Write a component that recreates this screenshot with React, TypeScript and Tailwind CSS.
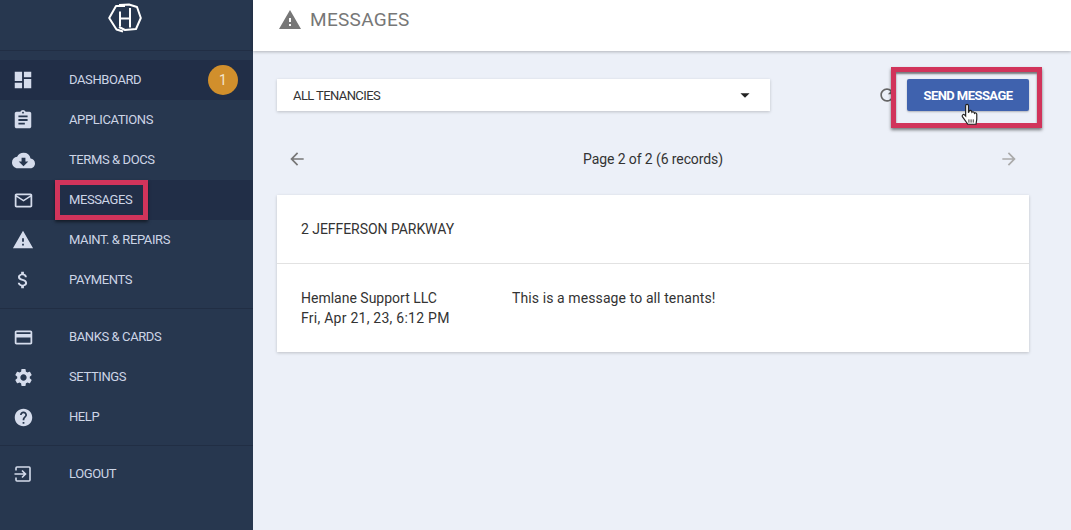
import React from 'react';
import {
  MdDashboard,
  MdAssignment,
  MdCloudDownload,
  MdMailOutline,
  MdWarning,
  MdAttachMoney,
  MdCreditCard,
  MdSettings,
  MdHelp,
  MdArrowBack,
  MdArrowForward,
  MdArrowDropDown,
  MdRefresh,
} from 'react-icons/md';

const LogoutIcon = () => (
  <svg width="18" height="18" viewBox="0 0 18 18" fill="none" stroke="currentColor" strokeWidth="1.6">
    <path d="M2 5.500V3a1 1 0 0 1 1-1h12a1 1 0 0 1 1 1v12a1 1 0 0 1-1 1H3a1 1 0 0 1-1-1v-2.500" />
    <path d="M0.500 9H11M8 5.500 11.500 9 8 12.500" />
  </svg>
);

const Logo = () => (
  <svg width="34" height="30" viewBox="0 0 34 30" fill="none" stroke="white" strokeWidth="2" strokeLinejoin="round">
    <path d="M17 3 8 3 1.200 15 8.500 26.500 15 28.500" />
    <path d="M11 2 21 1.500 29 4 32.800 15 28 26 17 27 11 24" />
    <path d="M12 8.500V23.500M22 5V24.500M12 15.500H22" />
  </svg>
);

const HandCursor = () => (
  <svg width="20" height="24" viewBox="0 0 18 22">
    <path
      d="M5 2.500a1.300 1.300 0 0 1 2.600 0V9l.6-1.500a1.200 1.200 0 0 1 2.200 0l.3 1a1.200 1.200 0 0 1 2.100.300l.3.700a1.200 1.200 0 0 1 2.100.800v4.500L14.500 19.500H7L2 12.500a1.300 1.300 0 0 1 2-1.600l1 1z"
      fill="white"
      stroke="#222"
      strokeWidth="1.100"
    />
    <path d="M8 15v3M10 15v3M12 15v3" stroke="#333" strokeWidth="0.900" />
  </svg>
);

type Item = { label: string; icon: React.ReactNode; active?: boolean; badge?: string };

const topItems: Item[] = [
  { label: 'DASHBOARD', icon: <MdDashboard size={22} />, active: true, badge: '1' },
  { label: 'APPLICATIONS', icon: <MdAssignment size={22} /> },
  { label: 'TERMS & DOCS', icon: <MdCloudDownload size={23} /> },
  { label: 'MESSAGES', icon: <MdMailOutline size={21} />, active: true },
  { label: 'MAINT. & REPAIRS', icon: <MdWarning size={22} /> },
  { label: 'PAYMENTS', icon: <MdAttachMoney size={22} /> },
];

const midItems: Item[] = [
  { label: 'BANKS & CARDS', icon: <MdCreditCard size={21} /> },
  { label: 'SETTINGS', icon: <MdSettings size={21} /> },
  { label: 'HELP', icon: <MdHelp size={21} /> },
];

const NavRow = ({ item }: { item: Item }) => (
  <div className={`flex h-10 items-center ${item.active ? 'bg-[#212e47]' : ''}`}>
    <span className="flex w-[46px] justify-center text-[#d5dcec]">{item.icon}</span>
    <span className="ml-[23px] text-[13px] tracking-[-0.4px] text-[#cdd5e6]">{item.label}</span>
    {item.badge && (
      <span className="ml-auto mr-[15px] flex h-[30px] w-[30px] items-center justify-center rounded-full bg-[#d18f2c] text-[14px] text-[#f3e6cf]">
        {item.badge}
      </span>
    )}
  </div>
);

export default function App() {
  return (
    <div className="flex h-[530px] w-[1071px] overflow-hidden bg-[#ecf0f8] font-['Roboto',sans-serif]">
      <aside className="relative w-[253px] shrink-0 bg-[#27374f]">
        <div className="flex h-[51px] justify-center border-b border-[#212e44] pr-[3px] pt-[3px]">
          <Logo />
        </div>
        <div className="flex flex-col pt-[9px]">
          <div className="mb-[8px] border-b border-[#212e44] pb-[8px]">
            {topItems.map((item) => (
              <NavRow key={item.label} item={item} />
            ))}
          </div>
          <div className="mb-[8px] border-b border-[#212e44] pb-[8px]">
            {midItems.map((item) => (
              <NavRow key={item.label} item={item} />
            ))}
          </div>
          <NavRow item={{ label: 'LOGOUT', icon: <LogoutIcon /> }} />
        </div>
        <div className="absolute left-[55px] top-[180px] h-[40px] w-[93px] border-[5px] border-[#d1345b] shadow-[0_2px_3px_rgba(0,0,0,0.5)]" />
      </aside>

      <main className="relative flex-1">
        <header className="flex h-[51px] items-center bg-white pb-[11px] pl-[25px] shadow-[0_1px_3px_rgba(0,0,0,0.25)]">
          <MdWarning size={24} className="text-[#777]" />
          <h1 className="ml-[8px] text-[19px] tracking-[0.3px] text-[#777]">MESSAGES</h1>
        </header>

        <div className="pl-[24px] pr-[42px] pt-[28px]">
          <div className="flex items-center justify-between">
            <div className="flex h-[32px] w-[493px] items-center justify-between bg-white pl-[16px] pr-[14px] shadow-[0_1px_3px_rgba(0,0,0,0.2)]">
              <span className="pt-[2px] text-[13px] tracking-[-0.6px] text-[#333]">ALL TENANCIES</span>
              <MdArrowDropDown size={22} className="text-[#222]" />
            </div>
            <div className="flex items-center gap-[10px]">
              <MdRefresh size={20} className="text-[#666]" />
              <button
                type="button"
                className="h-[32px] w-[122px] rounded-[2px] bg-[#3f62ae] pt-[1px] text-[13px] font-bold tracking-[-0.55px] text-white shadow-[0_1px_2px_rgba(0,0,0,0.25)]"
              >
                SEND MESSAGE
              </button>
            </div>
          </div>

          <div className="mt-[32px] flex h-[32px] items-center justify-between px-[10px]">
            <MdArrowBack size={20} className="text-[#777]" />
            <span className="text-[14px] tracking-[-0.1px] text-[#333]">Page 2 of 2 (6 records)</span>
            <MdArrowForward size={20} className="text-[#aaa]" />
          </div>

          <div className="mt-[20px] bg-white shadow-[0_1px_3px_rgba(0,0,0,0.2)]">
            <div className="flex h-[69px] items-center border-b border-[#e2e2e2] px-[24px] text-[14px] tracking-[-0.05px] text-[#333]">
              2 JEFFERSON PARKWAY
            </div>
            <div className="flex h-[88px] px-[24px] pt-[24px] text-[14px] leading-[20px] text-[#333]">
              <div className="w-[211px]">
                <div>Hemlane Support LLC</div>
                <div className="tracking-[0.25px]">Fri, Apr 21, 23, 6:12 PM</div>
              </div>
              <div className="tracking-[0.1px]">This is a message to all tenants!</div>
            </div>
          </div>
        </div>

        <div className="absolute left-[638px] top-[67px] h-[61px] w-[151px] border-[5px] border-[#d1345b] shadow-[0_2px_3px_rgba(0,0,0,0.5),inset_0_2px_2px_rgba(0,0,0,0.5)]" />
        <div className="absolute left-[707px] top-[103px]">
          <HandCursor />
        </div>
      </main>
    </div>
  );
}
